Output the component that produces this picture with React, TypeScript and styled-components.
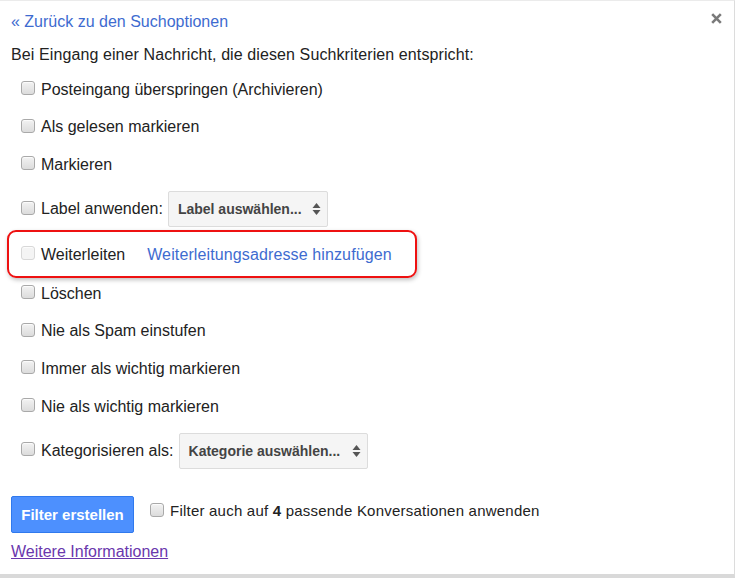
import React from 'react'
import styled, { createGlobalStyle } from 'styled-components'

const GlobalStyle = createGlobalStyle`
  html, body {
    margin: 0;
    padding: 0;
    background: #fff;
  }
  body {
    font-family: Arial, "Liberation Sans", sans-serif;
    font-size: 16px;
    color: #222;
  }
`

const Dialog = styled.div`
  position: relative;
  box-sizing: border-box;
  width: 735px;
  height: 578px;
  border-top: 1px solid #ebebeb;
  border-right: 1px solid #dcdcdc;
  border-bottom: 4px solid #d9d9d9;
  background: #fff;
  padding: 11px 0 0 11px;
`

const CloseButton = styled.button`
  position: absolute;
  top: 12px;
  right: 12px;
  width: 11px;
  height: 11px;
  padding: 0;
  border: 0;
  background: none;
  cursor: pointer;
  display: flex;
`

const BackLink = styled.a`
  display: block;
  color: #3e6bd0;
  text-decoration: none;
  line-height: 20px;
  height: 20px;
  cursor: pointer;
`

const Heading = styled.div`
  margin-top: 13px;
  line-height: 20px;
  height: 20px;
  letter-spacing: 0.1px;
`

const Options = styled.div`
  display: flex;
  flex-direction: column;
  margin-top: 5.5px;
  padding-left: 9px;
`

const Row = styled.label<{ h: number; highlight?: boolean }>`
  position: relative;
  display: flex;
  align-items: center;
  height: ${p => p.h}px;
  white-space: nowrap;

  ${p => p.highlight && `
    &::after {
      content: '';
      position: absolute;
      left: -13px;
      top: -5px;
      width: 406px;
      height: 44px;
      border: 2.5px solid #ee1111;
      border-radius: 9px;
      box-shadow: 1px 2px 4px rgba(0, 0, 0, 0.25);
      pointer-events: none;
    }
  `}
`

const Check = styled.span<{ disabled?: boolean }>`
  display: inline-block;
  box-sizing: border-box;
  width: 14px;
  height: 14px;
  margin: 0 6px 3px 1px;
  border: 1px solid ${p => (p.disabled ? '#d8d8d8' : '#a9a9a9')};
  border-radius: 3px;
  background: ${p => (p.disabled ? '#f4f4f4' : 'linear-gradient(#f2f2f2, #dcdcdc)')};
  box-shadow: inset 0 1px 1px rgba(255, 255, 255, 0.8);
  flex-shrink: 0;
`

const Text = styled.span`
  line-height: 20px;
`

const Link = styled.a`
  color: #3e6bd0;
  text-decoration: none;
  margin-left: 22px;
  letter-spacing: 0.12px;
  cursor: pointer;
`

const Select = styled.div<{ w: number }>`
  box-sizing: border-box;
  display: flex;
  align-items: center;
  justify-content: space-between;
  width: ${p => p.w}px;
  height: 36px;
  margin-left: 5px;
  padding: 0 6px 0 9px;
  border: 1px solid #dcdcdc;
  border-radius: 2px;
  background: #f5f5f5;
  color: #444;
  font-size: 14px;
  font-weight: bold;
  cursor: default;
`

const Footer = styled.div`
  display: flex;
  align-items: center;
  margin-top: 20px;
  height: 37px;
`

const PrimaryButton = styled.button`
  height: 37px;
  width: 123px;
  padding: 0;
  border: 1px solid #3079ed;
  border-radius: 2px;
  background: #4d90fe;
  color: #fff;
  font-family: inherit;
  font-size: 15px;
  font-weight: bold;
  cursor: pointer;
`

const ApplyLabel = styled.label`
  display: flex;
  align-items: center;
  margin: 0 0 6px 15px;
  font-size: 15px;
  letter-spacing: 0.22px;
  b {
    font-weight: bold;
  }
`

const MoreInfo = styled.a`
  display: inline-block;
  margin-top: 9px;
  color: #6a37ad;
  text-decoration: underline;
  line-height: 20px;
  cursor: pointer;
`

const Arrows = () => (
  <svg width="9" height="14" viewBox="0 0 9 14">
    <path d="M4.5 1 L8.5 6 H0.5 Z" fill="#555" />
    <path d="M4.5 13 L8.5 8 H0.5 Z" fill="#555" />
  </svg>
)

const CloseIcon = () => (
  <svg width="11" height="11" viewBox="0 0 11 11">
    <path d="M1.2 1.2 L9.8 9.8 M9.8 1.2 L1.2 9.8" stroke="#7a7a7a" strokeWidth="2.6" />
  </svg>
)

type Option = {
  label: string
  h: number
  select?: { text: string; w: number }
  disabled?: boolean
  link?: string
}

const options: Option[] = [
  { label: 'Posteingang überspringen (Archivieren)', h: 38 },
  { label: 'Als gelesen markieren', h: 37 },
  { label: 'Markieren', h: 38 },
  { label: 'Label anwenden:', h: 51, select: { text: 'Label auswählen...', w: 160 } },
  { label: 'Weiterleiten', h: 40, disabled: true, link: 'Weiterleitungsadresse hinzufügen' },
  { label: 'Löschen', h: 38 },
  { label: 'Nie als Spam einstufen', h: 37 },
  { label: 'Immer als wichtig markieren', h: 38 },
  { label: 'Nie als wichtig markieren', h: 38 },
  { label: 'Kategorisieren als:', h: 50, select: { text: 'Kategorie auswählen...', w: 189 } },
]

export default function App() {
  return (
    <Dialog>
      <GlobalStyle />
      <CloseButton aria-label="Schließen">
        <CloseIcon />
      </CloseButton>
      <BackLink>« Zurück zu den Suchoptionen</BackLink>
      <Heading>Bei Eingang einer Nachricht, die diesen Suchkriterien entspricht:</Heading>
      <Options>
        {options.map(o => (
          <Row key={o.label} h={o.h} highlight={!!o.link}>
            <Check disabled={o.disabled} />
            <Text>{o.label}</Text>
            {o.select && (
              <Select w={o.select.w}>
                <span>{o.select.text}</span>
                <Arrows />
              </Select>
            )}
            {o.link && <Link>{o.link}</Link>}
          </Row>
        ))}
      </Options>
      <Footer>
        <PrimaryButton>Filter erstellen</PrimaryButton>
        <ApplyLabel>
          <Check />
          <Text>
            Filter auch auf <b>4</b> passende Konversationen anwenden
          </Text>
        </ApplyLabel>
      </Footer>
      <MoreInfo>Weitere Informationen</MoreInfo>
    </Dialog>
  )
}
